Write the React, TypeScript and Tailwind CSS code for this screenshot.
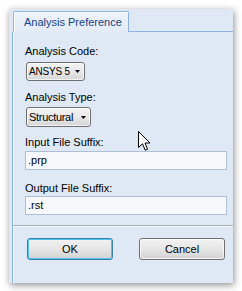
import type { ReactNode } from 'react'

const font = { fontFamily: '"Liberation Sans", Arial, sans-serif' }

export default function App() {
  return (
    <div className="relative h-[291px] w-[242px] bg-white pl-[9px] pt-[9px]" style={font}>
      <div className="flex h-[274px] w-[224px] flex-col bg-[#dfe9f5] shadow-[1px_2px_7px_rgba(0,0,0,0.45)]">
        <div className="flex h-[23px] shrink-0">
          <div className="w-[4px] shrink-0" />
          <div className="mt-[2px] flex h-[21px] w-[116px] shrink-0 items-center rounded-t-[2px] border border-b-0 border-[#8eb2e2] bg-gradient-to-b from-[#eef3fb] to-[#e2ebf7] pl-[10px] text-[11px] text-[#15428b] shadow-[inset_1px_1px_0_#ffffff]">
            Analysis Preference
          </div>
          <div className="flex-1 border-b border-[#8eb4e6]" />
        </div>

        <div className="ml-[3px] flex flex-1 flex-col border-l border-[#8eb4e6] shadow-[inset_1px_0_0_#f3f7fc]">
          <div className="flex flex-col pl-[12px] pt-[13px]">
            <Label>Analysis Code:</Label>
            <Dropdown className="mt-[4px] h-[19px] w-[59px] text-[10px] tracking-[-0.2px]">ANSYS 5</Dropdown>

            <Label className="mt-[10px]">Analysis Type:</Label>
            <Dropdown className="mt-[3px] h-[20px] w-[65px] text-[11px] tracking-[-0.3px]">Structural</Dropdown>

            <Label className="mt-[9px]">Input File Suffix:</Label>
            <Field className="mt-[2px]">.prp</Field>

            <Label className="mt-[12px]">Output File Suffix:</Label>
            <Field className="mt-px">.rst</Field>
          </div>

          <div className="mt-[10px] h-px bg-[#a4acb6] shadow-[0_1px_0_#f5f8fc]" />

          <div className="flex gap-[26px] pl-[14px] pt-[12px]">
            <Button primary>OK</Button>
            <Button>Cancel</Button>
          </div>
        </div>
      </div>

      <svg className="absolute left-[138px] top-[131px]" width="13" height="21" viewBox="0 0 13 21">
        <path
          d="M0.5 0.5 L0.5 16.5 L4.5 12.8 L7.2 19.2 L9.6 18.2 L7 12 L12 12 Z"
          fill="#ffffff"
          stroke="#000000"
          strokeWidth="1"
          strokeLinejoin="miter"
        />
      </svg>
    </div>
  )
}

function Label({ children, className = '' }: { children: ReactNode; className?: string }) {
  return <div className={`text-[11px] leading-[13px] text-black ${className}`}>{children}</div>
}

function Dropdown({ children, className = '' }: { children: ReactNode; className?: string }) {
  return (
    <div
      className={`ml-px flex items-center whitespace-nowrap rounded-[3px] border border-[#707070] bg-gradient-to-b from-[#f3f3f3] via-[#e8e8e8] to-[#d6d6d6] pl-[2px] pr-[4px] leading-none text-black shadow-[inset_0_0_0_1px_rgba(255,255,255,0.7)] ${className}`}
    >
      <span>{children}</span>
      <svg className="ml-auto shrink-0" width="5" height="3" viewBox="0 0 5 3">
        <path d="M0 0 L5 0 L2.5 3 Z" fill="#000000" />
      </svg>
    </div>
  )
}

function Field({ children, className = '' }: { children: ReactNode; className?: string }) {
  return (
    <div
      className={`flex h-[19px] w-[202px] items-center border border-[#aebfd6] bg-[#f6f8fb] pl-[2px] text-[11px] text-black ${className}`}
    >
      {children}
    </div>
  )
}

function Button({ children, primary = false }: { children: ReactNode; primary?: boolean }) {
  return (
    <div
      className={`flex h-[22px] w-[86px] items-center justify-center rounded-[3px] border bg-gradient-to-b from-[#f2f2f2] via-[#e6e6e6] to-[#d2d2d2] text-[11px] text-black ${
        primary
          ? 'border-[#3c7fb1] shadow-[inset_0_0_0_1px_#4fc3f0]'
          : 'border-[#707070] shadow-[inset_0_0_0_1px_rgba(255,255,255,0.75)]'
      }`}
    >
      {children}
    </div>
  )
}
